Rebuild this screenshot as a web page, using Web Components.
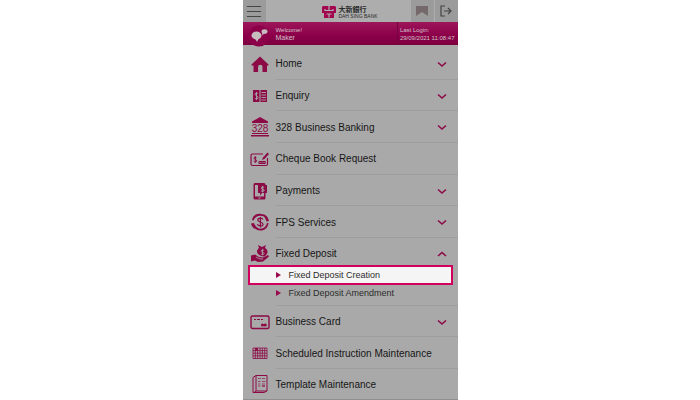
<!DOCTYPE html>
<html lang="en">
<head>
<meta charset="utf-8">
<title>Business e-Banking</title>
<style>
  body {
    margin: 0;
    background: #fff;
    font-family: "Liberation Sans", Arial, sans-serif;
    color: #161616;
    --brand: #8c0a46;
    --panel: #a9a9a9;
    --line: #9d9d9d;
  }
</style>
</head>
<body>
<menu-panel>
  <bank-header slot="header"></bank-header>
  <welcome-bar slot="header" user="Maker" login="29/09/2021 11:08:47"></welcome-bar>
  <menu-row icon="home" arrow="down">Home</menu-row>
  <menu-row icon="enquiry" arrow="down">Enquiry</menu-row>
  <menu-row icon="bank" arrow="down">328 Business Banking</menu-row>
  <menu-row icon="cheque">Cheque Book Request</menu-row>
  <menu-row icon="payments" arrow="down">Payments</menu-row>
  <menu-row icon="fps" arrow="down">FPS Services</menu-row>
  <menu-row icon="deposit" arrow="up">Fixed Deposit</menu-row>
  <sub-menu>
    <sub-item active>Fixed Deposit Creation</sub-item>
    <sub-item>Fixed Deposit Amendment</sub-item>
  </sub-menu>
  <menu-row icon="card" arrow="down">Business Card</menu-row>
  <menu-row icon="calendar">Scheduled Instruction Maintenance</menu-row>
  <menu-row icon="template">Template Maintenance</menu-row>
</menu-panel>

<script>
const ICONS = {
  home: '<path d="M1.500 10.500L10 2.500L18.500 10.500V11.500H17V18H12.500V13a2.200 2.200 0 0 0-4.400 0V18H3.500V11.500H1.500z"/>',
  enquiry: '<path d="M3 4H9.500V16H3zM10.500 4H17V16H10.500z"/><path d="M8 7.800C7.500 6.800 5 6.800 5 8.300S8.200 10 8.200 11.700 5.300 13.400 4.800 12M6.500 6v8M11.500 6.500H16M11.500 9H16M11.500 11.500H16M11.500 14H16" fill="none" stroke="#a9a9a9" stroke-width=".9"/>',
  bank: '<path d="M10 0L18 4.500V6H2V4.500zM2 16H18V17H2zM1 18H19V19.500H1z"/><text x="10" y="14.500" text-anchor="middle" font-size="10">328</text>',
  cheque: '<path d="M13 5H2.500a1.500 1.500 0 0 0-1.500 1.500V15a1.500 1.500 0 0 0 1.500 1.500H16a1.500 1.500 0 0 0 1.500-1.500V9M9 14.500V12.500M11 14.500V12.500M13 14.500V12.500M9 14.500H15V12.500H9" fill="none" stroke="currentColor" stroke-width="1.200"/><path d="M6.500 8.800C6 7.800 4 8 4 9.200S6.700 10.400 6.700 11.800 4.300 13.200 3.700 12M5.300 7.300v6.400" fill="none" stroke="currentColor"/><path d="M12 11L13 8.500 17.500 3.500 19 5 14.500 10z"/>',
  payments: '<path fill-rule="evenodd" d="M5 2H14a1.500 1.500 0 0 1 1.500 1.500V17a1.500 1.500 0 0 1-1.500 1.500H5A1.500 1.500 0 0 1 3.500 17V3.500A1.500 1.500 0 0 1 5 2zM5 4V15.500H14V4zM8.500 16.500v1h2v-1z"/><path d="M8 4H17V12H12L10 14.500V12H8z"/><path d="M14 6.500C13.500 5.700 11.300 5.700 11.300 7S14.200 8 14.200 9.300 11.500 10.600 11 9.500M12.700 5v6.300" fill="none" stroke="#a9a9a9"/>',
  fps: '<path d="M2 8C3 2 9 0 15 3.500L14 4.500C9 2.500 5 4.500 3.500 8.500zM18.500 11C18 17 12 20.500 6 17.500L7 16C12 18 16 15.500 17 11zM1 11.500L4 11C5 14 7 16 10 17C5 18 2 16 1 11.500zM11 2C16 2 18 5 19 9L16.500 9.500C15.500 6 14 4 11 2z"/><path d="M12.800 7.500C12 5.500 7.800 5.700 7.800 8S13 9.800 13 12.200 8.500 14.600 7.300 12.200M10.400 5v10.600" fill="none" stroke="currentColor" stroke-width="1.200"/>',
  deposit: '<path d="M8 1L12 3 16 1 15 4C19 6 18 11 14 12.500 10 12 6.500 10 7 7 7.500 5 9 4 9 4zM1 11.500L5 10.500 9 13 13 13.500 18 11 19 12.500 13 17.500 8 18 5 16.500 1 17.500z"/><path d="M14 6.500C13 5.500 11 6 11.200 7.300S14 8 14 9.500 11.500 10.800 11 9.800M12.500 4.800v6.500M6 13L10 15H13" fill="none" stroke="#a9a9a9" stroke-width=".8"/>',
  card: '<rect x="1" y="4" width="18" height="12.500" rx="1.500" fill="none" stroke="currentColor" stroke-width="1.400"/><path d="M4 7.500h2m1 0h3m1 0h2" stroke="currentColor"/><circle cx="12.500" cy="13" r="1.600"/><circle cx="15.200" cy="13" r="1.600"/>',
  calendar: '<path d="M3 5H17V15.500H3zM3 7.600H17M3 10.200H17M3 12.800H17M5.300 5V15.500M7.600 5V15.500M10 5V15.500M12.300 5V15.500M14.700 5V15.500" fill="none" stroke="currentColor" stroke-width=".8"/><path d="M5.300 5H7.600V7.600H5.300z"/>',
  template: '<path d="M6 1.500H17V17H6L4 18.500M6 1.500L3 3.500V18.500H14L17 17M6 1.500V17" fill="none" stroke="currentColor"/><path d="M8 4.500H11M12 4.500H15M8 7.500H10.500M12 7.500H15.500M8 10H10.500M8 12H10.500M12 10H15" stroke="currentColor" opacity=".6"/><path d="M12 11H15V13H12z" opacity=".6"/>'
};

/**
 * Centered column that holds the header and the menu entries.
 * @element menu-panel
 */
class MenuPanel extends HTMLElement {
  constructor() {
    super();
    this.attachShadow({ mode: 'open' }).innerHTML = `
      <style>
        :host { display: flex; flex-direction: column; box-sizing: border-box; min-height: 100vh; width: 30%; min-width: 215px; margin: 0 auto; background: var(--panel); border-bottom: 1px solid #8f8f8f; }
        nav { flex: 1; display: flex; flex-direction: column; padding-top: 3px; }
      </style>
      <slot name="header"></slot>
      <nav aria-label="Main"><slot></slot></nav>
    `;
  }
}

/**
 * Top bar with the menu button, the logo and the two tools.
 * @element bank-header
 */
class BankHeader extends HTMLElement {
  constructor() {
    super();
    this.attachShadow({ mode: 'open' }).innerHTML = `
      <style>
        :host { display: flex; align-items: stretch; height: 22px; background: #adadad; }
        button { width: 23px; margin: 0; padding: 0; border: 0; background: #9b9b9b; color: #454545; display: flex; align-items: center; justify-content: center; }
        .tools { display: flex; gap: 1px; }
        .menu { margin-right: 24px; }
        .logo { flex: 1; display: flex; align-items: center; justify-content: center; gap: 2px; padding-top: 2px; }
        .name { display: flex; flex-direction: column; color: #2b2b2b; }
        .zh { font: bold 7px/8px "Noto Sans CJK TC", sans-serif; }
        .en { font-size: 5px; line-height: 6px; white-space: nowrap; }
      </style>
      <button class="menu" aria-label="Menu"><svg width="14" height="12" viewBox="0 0 14 12"><path d="M0 1.500H14M0 6.500H14M0 11.500H14" stroke="currentColor" stroke-width="1.200"/></svg></button>
      <div class="logo">
        <svg width="14" height="14" viewBox="0 0 14 14"><path d="M1 1H6L7 2 8 1H13L14 2V8H12V13H2V8H0V2z" fill="#a3074f"/><path d="M7 1.500V5.500M3 4V5.500H11V4M7 9V12.500M4.500 9H9.500" fill="none" stroke="#adadad" stroke-width="1.200"/></svg>
        <div class="name"><span class="zh">大新銀行</span><span class="en">DAH SING BANK</span></div>
      </div>
      <div class="tools">
        <button aria-label="Bookmark"><svg width="12" height="10" viewBox="0 0 12 10"><path d="M0 0H12V10L6 6 0 10z" fill="#75696c"/></svg></button>
        <button aria-label="Log out"><svg width="12" height="12" viewBox="0 0 12 12" fill="none" stroke="currentColor" stroke-width="1.200"><path d="M5 1H1V11H5M4 6H11M8 3L11 6 8 9"/></svg></button>
      </div>
    `;
  }
}

/**
 * Greeting and time of the last login.
 * @element welcome-bar
 */
class WelcomeBar extends HTMLElement {
  constructor() {
    super();
    this.attachShadow({ mode: 'open' }).innerHTML = `
      <style>
        :host { display: flex; height: 23px; background: linear-gradient(#9d155b, #8c0049 60%, #7c003f); color: #d2c2c9; font-size: 6px; line-height: 8px; }
        .chat { width: 33px; height: 26px; z-index: 1; }
        .user, .login { display: flex; flex-direction: column; justify-content: center; white-space: nowrap; }
        .user { flex: 1; }
        .user b { font-size: 7px; font-weight: normal; }
        .login { padding: 0 3px 0 2px; border-left: 1px solid #74043d; }
      </style>
      <svg class="chat" viewBox="0 0 33 26"><circle cx="16" cy="14" r="10.500" fill="#8c0049"/><g fill="#c7bdc1"><ellipse cx="13.500" cy="13.500" rx="5" ry="4"/><path d="M12 16L14 20 16 16z"/><ellipse cx="21.500" cy="9.500" rx="3" ry="2.300"/><path d="M19.500 11L19 13.500 22 11z"/></g></svg>
      <div class="user"><span>Welcome!</span><b></b></div>
      <div class="login"><span>Last Login:</span><time></time></div>
    `;
  }

  connectedCallback() {
    this.shadowRoot.querySelector('b').textContent = this.getAttribute('user');
    this.shadowRoot.querySelector('time').textContent = this.getAttribute('login');
  }
}

/**
 * One entry of the main menu.
 * @element menu-row
 */
class MenuRow extends HTMLElement {
  constructor() {
    super();
    this.attachShadow({ mode: 'open' });
  }

  connectedCallback() {
    const arrow = this.getAttribute('arrow');
    const points = arrow === 'up' ? 'M1 5L5 1.500 9 5' : 'M1 1.500L5 5 9 1.500';
    this.shadowRoot.innerHTML = `
      <style>
        :host { display: flex; flex: 1 1 30px; }
        :host(:last-child) { flex: 0 0 30px; }
        button { flex: 1; display: flex; align-items: stretch; margin: 0; padding: 0 0 0 7px; border: 0; background: none; color: inherit; font: 10px/14px "Liberation Sans", Arial, sans-serif; text-align: left; white-space: nowrap; }
        .icon { align-self: center; width: 20px; height: 20px; margin-right: 6px; color: var(--brand); fill: currentColor; overflow: visible; }
        .label { flex: 1; display: flex; align-items: center; justify-content: space-between; padding: 2px 11px 0 0; border-bottom: 1px solid var(--line); }
        :host([arrow="up"]) .label, :host(:last-child) .label { border-color: transparent; }
        .arrow { fill: none; stroke: var(--brand); stroke-width: 1.600; }
      </style>
      <button${arrow ? ` aria-expanded="${arrow === 'up'}"` : ''}>
        <svg class="icon" viewBox="0 0 20 20">${ICONS[this.getAttribute('icon')]}</svg>
        <span class="label"><slot></slot>${arrow ? `<svg class="arrow" width="10" height="7" viewBox="0 0 10 7"><path d="${points}"/></svg>` : ''}</span>
      </button>
    `;
  }
}

/**
 * Group of entries under an open row.
 * @element sub-menu
 */
class SubMenu extends HTMLElement {
  constructor() {
    super();
    this.attachShadow({ mode: 'open' }).innerHTML = `
      <style>
        :host { display: flex; flex-direction: column; margin: -5px 0 0; }
        .end { height: 4px; margin-left: 33px; border-bottom: 1px solid var(--line); }
      </style>
      <slot></slot>
      <div class="end"></div>
    `;
  }
}

/**
 * One entry of a sub menu.
 * @element sub-item
 */
class SubItem extends HTMLElement {
  constructor() {
    super();
    this.attachShadow({ mode: 'open' }).innerHTML = `
      <style>
        :host { display: flex; margin: 0 5px; }
        a { flex: 1; display: flex; align-items: center; gap: 8px; padding: 0 28px; color: #2c2c2c; font-size: 9px; line-height: 16px; text-decoration: none; white-space: nowrap; }
        :host([active]) a { padding: 0 26px; border: 2px solid #d1005d; background: #f5f5f5; }
      </style>
      <a href="#"><svg width="5" height="6" viewBox="0 0 5 6"><path d="M0 0L5 3 0 6z" fill="#9b0a4c"/></svg><slot></slot></a>
    `;
  }
}

customElements.define('menu-panel', MenuPanel);
customElements.define('bank-header', BankHeader);
customElements.define('welcome-bar', WelcomeBar);
customElements.define('menu-row', MenuRow);
customElements.define('sub-menu', SubMenu);
customElements.define('sub-item', SubItem);
</script>
</body>
</html>
